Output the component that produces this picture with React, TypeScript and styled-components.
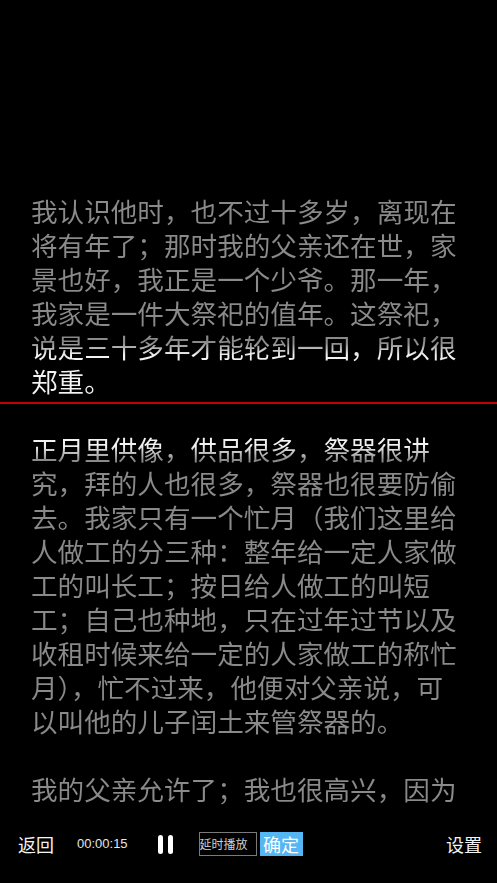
import React from "react";
import styled, { createGlobalStyle } from "styled-components";

const Global = createGlobalStyle`
  html, body { margin: 0; padding: 0; background: #000; }
  body { font-family: "Noto Sans CJK SC", "Noto Sans", sans-serif; }
  * { box-sizing: border-box; }
`;

const Page = styled.div`
  width: 497px;
  height: 883px;
  background: #000;
  display: flex;
  flex-direction: column;
  position: relative;
  overflow: hidden;
`;

const Reader = styled.div`
  height: 805px;
  overflow: hidden;
  flex: none;
`;

const Article = styled.div`
  padding: 194px 30px 0 31px;
  font-size: 26.6px;
  line-height: 34px;
  font-family: "Noto Sans CJK SC", sans-serif;
  background: linear-gradient(
    to bottom,
    #8a8a8a 0px,
    #8a8a8a 343px,
    #f2f2f2 355px,
    #f2f2f2 446px,
    #8a8a8a 460px,
    #8a8a8a 100%
  );
  -webkit-background-clip: text;
  background-clip: text;
  -webkit-text-fill-color: transparent;
  color: transparent;
`;

const Para = styled.p`
  margin: 0 0 34px 0;
`;

const Marker = styled.div`
  position: absolute;
  left: 0;
  right: 0;
  top: 402px;
  height: 2px;
  background: #c40000;
`;

const Toolbar = styled.div`
  flex: 1;
  display: flex;
  align-items: center;
  padding: 0 15px 0 18px;
  color: #fff;
`;

const TextButton = styled.span`
  font-size: 18px;
  line-height: 24px;
  color: #f4f4f4;
  font-family: "Noto Sans CJK SC", sans-serif;
`;

const Clock = styled.span`
  font-family: "Liberation Sans", Arial, sans-serif;
  font-size: 13px;
  line-height: 16px;
  color: #e6e6e6;
  margin-left: 23px;
`;

const Pause = styled.span`
  display: flex;
  gap: 5px;
  margin-left: 30px;
  height: 19px;
`;

const PauseBar = styled.span`
  width: 5px;
  height: 19px;
  background: #fff;
  border-radius: 2.5px;
`;

const DelayBox = styled.span`
  margin-left: 26px;
  width: 58px;
  height: 24px;
  border: 1px solid #7a7a7a;
  font-size: 12px;
  line-height: 22px;
  color: #cfcfcf;
  white-space: nowrap;
  display: flex;
  align-items: center;
`;

const Confirm = styled.span`
  margin-left: 3px;
  width: 43px;
  height: 24px;
  background: #55b6f4;
  color: #fff;
  font-size: 18px;
  line-height: 24px;
  text-align: center;
`;

const Spacer = styled.span`
  flex: 1;
`;

export default function App() {
  return (
    <Page>
      <Global />
      <Reader>
        <Article>
          <Para>
            我认识他时，也不过十多岁，离现在将有年了；那时我的父亲还在世，家景也好，我正是一个少爷。那一年，我家是一件大祭祀的值年。这祭祀，说是三十多年才能轮到一回，所以很郑重。
          </Para>
          <Para>
            正月里供像，供品很多，祭器很讲究，拜的人也很多，祭器也很要防偷去。我家只有一个忙月（我们这里给人做工的分三种：整年给一定人家做工的叫长工；按日给人做工的叫短工；自己也种地，只在过年过节以及收租时候来给一定的人家做工的称忙月），忙不过来，他便对父亲说，可以叫他的儿子闰土来管祭器的。
          </Para>
          <Para>
            我的父亲允许了；我也很高兴，因为我早听到闰土这名字，而且知道他和我仿佛年纪，闰月生的，五行缺土，所以他的父亲叫他闰土。
          </Para>
        </Article>
      </Reader>
      <Marker />
      <Toolbar>
        <TextButton>返回</TextButton>
        <Clock>00:00:15</Clock>
        <Pause>
          <PauseBar />
          <PauseBar />
        </Pause>
        <DelayBox>延时播放</DelayBox>
        <Confirm>确定</Confirm>
        <Spacer />
        <TextButton>设置</TextButton>
      </Toolbar>
    </Page>
  );
}
